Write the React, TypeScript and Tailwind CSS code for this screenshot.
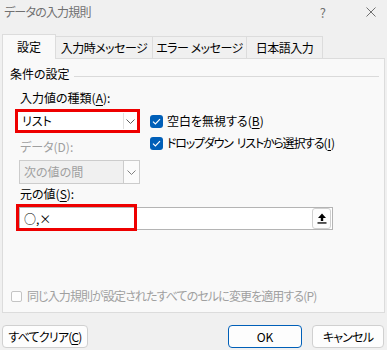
import React from "react";

function Chevron({ color = "#606060" }: { color?: string }) {
  return (
    <svg width="9" height="5" viewBox="0 0 9 5">
      <path d="M0.5 0.5 L4.5 4.5 L8.5 0.5" fill="none" stroke={color} strokeWidth="1" />
    </svg>
  );
}

function Checked() {
  return (
    <span className="flex h-[13px] w-[13px] shrink-0 items-center justify-center rounded-[3px] bg-[#005fb8]">
      <svg width="9" height="7" viewBox="0 0 9 7">
        <path d="M1 3.6 L3.4 6 L8 1.2" fill="none" stroke="white" strokeWidth="1.2" />
      </svg>
    </span>
  );
}

function Tab({ label, w }: { label: string; w: string }) {
  return (
    <div className={`flex h-[22px] ${w} items-center justify-center border border-b-0 border-l-0 border-[#dcdcdc] bg-[#f0f0f0] leading-none tracking-[-0.5px] whitespace-nowrap`}>
      {label}
    </div>
  );
}

export default function App() {
  return (
    <div className="flex h-[350px] w-[387px] flex-col overflow-hidden bg-[#f0f0f0] font-['Noto_Sans_CJK_JP','Noto_Sans',sans-serif] text-[12px] whitespace-nowrap text-black [font-feature-settings:'palt']">
      {/* title bar */}
      <div className="flex h-[34px] items-start pt-[4px] pl-[4px] leading-none text-[#707070]">
        <span className="mt-[2px] tracking-[-0.8px]">データの入力規則</span>
        <span className="mt-[2px] ml-auto text-[13px]">?</span>
        <span className="mt-[3px] mr-[11px] ml-[40px]">
          <svg width="10" height="10" viewBox="0 0 10 10">
            <path d="M0.5 0.5 L9.5 9.5 M9.5 0.5 L0.5 9.5" stroke="#707070" strokeWidth="1" />
          </svg>
        </span>
      </div>

      {/* tabs */}
      <div className="relative z-10 flex h-[24px] items-end pl-[2px]">
        <div className="-mb-px flex h-[25px] w-[54px] items-center justify-center border border-b-0 border-[#dcdcdc] bg-[#f9f9f9] leading-none">
          設定
        </div>
        <Tab label="入力時メッセージ" w="w-[97px]" />
        <Tab label="エラー メッセージ" w="w-[94px]" />
        <Tab label="日本語入力" w="w-[76px]" />
      </div>

      {/* panel */}
      <div className="mx-[2px] flex h-[255px] flex-col border border-[#dcdcdc] bg-[#f9f9f9] leading-none">
        <div className="flex h-[30px] items-center pl-[7px]">
          <span>条件の設定</span>
          <span className="mt-[4px] mr-[5px] ml-[4px] h-px flex-1 bg-[#dadada]" />
        </div>
        <div className="flex h-[18px] items-center pl-[17px]">
          入力値の種類(<span className="underline underline-offset-2">A</span>):
        </div>

        <div className="mt-[2px] flex pl-[12px]">
          <div className="flex w-[125px] flex-col">
            <div className="flex h-[24px] border-[3px] border-[#ee0000] bg-white">
              <div className="flex flex-1 items-center pl-[4px]">リスト</div>
              <div className="my-[1px] flex w-[14px] items-center justify-center border-l border-[#e0e0e0]">
                <Chevron />
              </div>
            </div>
            <div className="flex h-[27px] items-center pl-[5px] text-[#a0a0a0]">データ(D):</div>
            <div className="ml-[4px] flex h-[24px] w-[121px] border border-[#cccccc] bg-[#f0f0f0]">
              <div className="flex flex-1 items-center pl-[4px] text-[#a0a0a0]">次の値の間</div>
              <div className="flex w-[16px] items-center justify-center border-l border-[#cccccc] bg-[#fbfbfb]">
                <Chevron color="#808080" />
              </div>
            </div>
            <div className="flex h-[20px] items-center pl-[5px]">
              元の値(<span className="underline underline-offset-2">S</span>):
            </div>
          </div>

          <div className="ml-[10px] flex flex-col">
            <div className="flex h-[24px] items-center gap-[4px]">
              <Checked />
              <span>
                空白を無視する(<span className="underline underline-offset-2">B</span>)
              </span>
            </div>
            <div className="flex h-[20px] items-center gap-[4px]">
              <Checked />
              <span className="tracking-[-1.2px]">
                ドロップダウン
                <span className="ml-[4px]">リストから選択する</span>
                <span className="tracking-normal">
                  (<span className="underline underline-offset-2">I</span>)
                </span>
              </span>
            </div>
          </div>
        </div>

        <div className="relative mt-[3px] ml-[16px] flex h-[23px] w-[314px] items-center border border-[#b4b4b4] bg-white pl-[4px]">
          <span>○,×</span>
          <div className="mr-px ml-auto flex h-[21px] w-[19px] items-center justify-center rounded-[3px] border border-[#d0d0d0] bg-[#fdfdfd]">
            <svg width="10" height="11" viewBox="0 0 10 11">
              <path d="M5 0.5 L9 5 L6.2 5 L6.2 8 L3.8 8 L3.8 5 L1 5 Z" fill="black" />
              <rect x="0.5" y="9.3" width="9" height="1.3" fill="black" />
            </svg>
          </div>
          <div className="absolute top-[-4px] left-[-4px] h-[27px] w-[121px] border-[3px] border-[#ee0000]" />
        </div>

        <div className="mt-auto mb-[6px] flex h-[20px] items-center pl-[8px] text-[#a0a0a0]">
          <span className="h-[11px] w-[11px] rounded-[2px] border border-[#c4c4c4] bg-[#fdfdfd]" />
          <span className="ml-[5px] tracking-[-0.9px]">同じ入力規則が設定されたすべてのセルに変更を適用する(P)</span>
        </div>
      </div>

      {/* footer */}
      <div className="mt-[12px] flex h-[23px] pr-[3px] pl-[2px] leading-none">
        <button className="flex w-[86px] items-center justify-center rounded-[4px] border border-[#d0d0d0] bg-[#fdfdfd] tracking-[-0.8px]">
          すべてクリア(<span className="underline underline-offset-2">C</span>)
        </button>
        <button className="ml-auto flex w-[74px] items-center justify-center rounded-[4px] border border-[#005fb8] bg-[#fdfdfd]">
          OK
        </button>
        <button className="ml-[10px] flex w-[72px] items-center justify-center rounded-[4px] border border-[#d0d0d0] bg-[#fdfdfd] tracking-[-0.8px]">
          キャンセル
        </button>
      </div>
    </div>
  );
}
